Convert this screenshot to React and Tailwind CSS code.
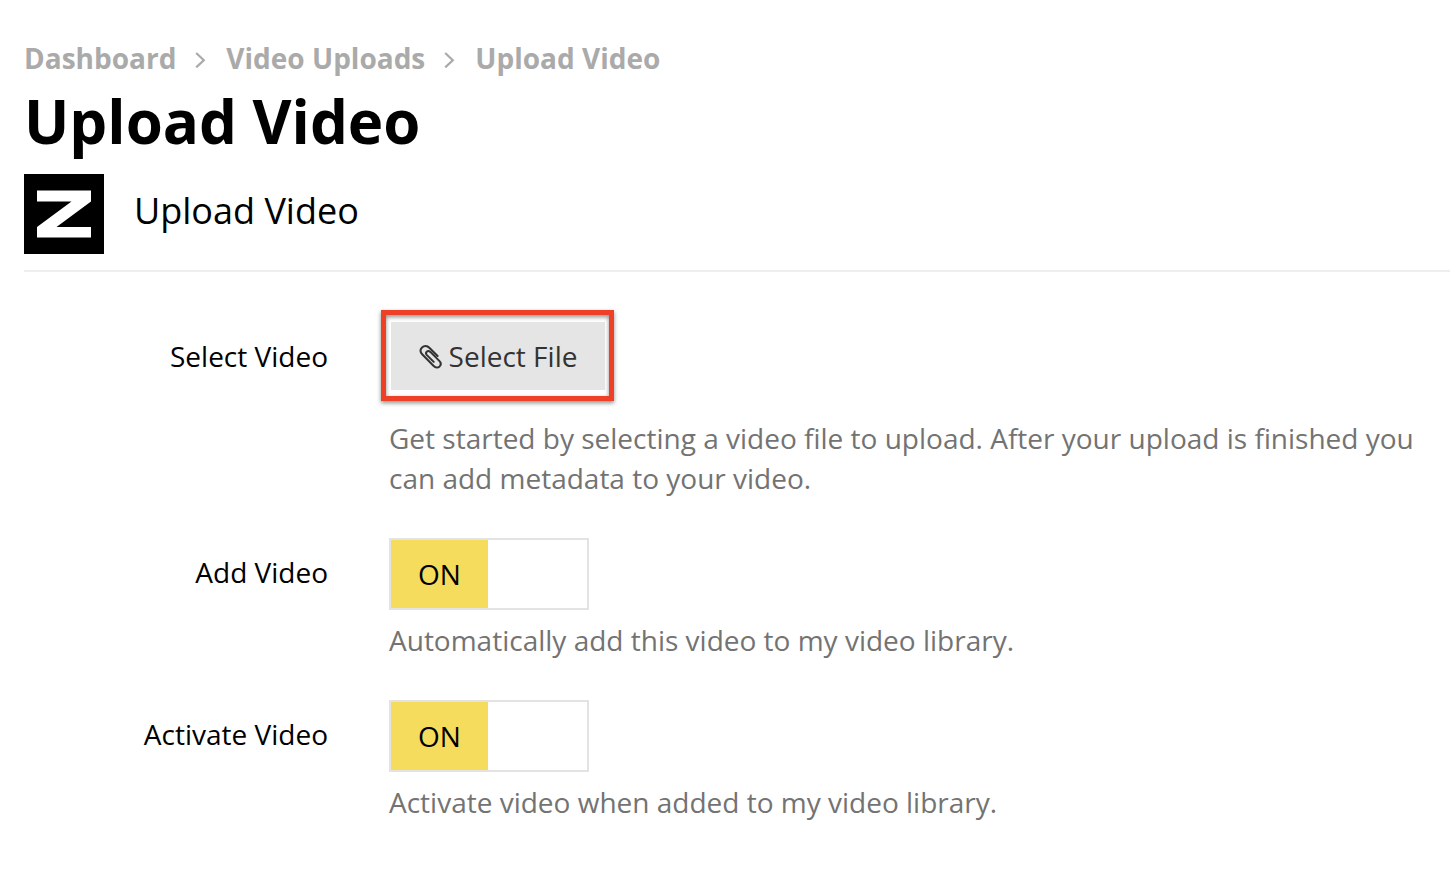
function Chevron() {
  return (
    <svg className="w-3 h-4 mt-1 shrink-0" viewBox="0 0 12 16" fill="none" stroke="#aaaaaa" strokeWidth="2.2" aria-hidden="true">
      <path d="M1.200 1 8.800 8.200 1.200 15.400" />
    </svg>
  );
}

function Logo() {
  return (
    <svg className="w-20 h-20 bg-black shrink-0" viewBox="0 0 80 80" fill="#ffffff" aria-hidden="true">
      <path d="M13 16.500H67V27.500L32.500 53H67V63.500H13V53L47.500 27.500H13Z" />
    </svg>
  );
}

function Paperclip() {
  return (
    <svg className="w-6 h-6 mt-0.5 shrink-0" viewBox="0 0 24 24" fill="none" stroke="#333333" strokeWidth="2" strokeLinecap="round" strokeLinejoin="round" aria-hidden="true">
      <path d="M18.600 11 10.600 3C8.100.500 5 .600 3 2.500 1 4.500 1.200 7.200 3.400 9.500L14.700 21C16.500 22.800 19 22.900 20.600 21.400 22.200 19.800 22 17.600 20.300 15.900L11.300 6.900C10.100 5.800 8.700 5.700 7.700 6.700 6.700 7.700 6.900 9 7.900 10.100L14.700 16.900" />
    </svg>
  );
}

function Toggle({ id }) {
  return (
    <div className="relative w-[200px] h-[72px] border-2 border-[#e3e3e3]">
      <input id={id} type="checkbox" defaultChecked className="peer absolute inset-0 w-full h-full opacity-0 cursor-pointer" />
      <span className="hidden peer-checked:flex w-[97px] h-full items-center justify-center bg-[#f5dc5d] text-black pointer-events-none">ON</span>
    </div>
  );
}

export default function UploadVideo() {
  const crumbs = ["Dashboard", "Video Uploads", "Upload Video"];
  const toggles = [
    { id: "add-video", label: "Add Video", help: "Automatically add this video to my video library." },
    { id: "activate-video", label: "Activate Video", help: "Activate video when added to my video library." },
  ];

  return (
    <div className="min-h-screen bg-white pl-6 pt-[38px] text-black text-[28px] leading-10 font-['Open_Sans',sans-serif]">
      <header>
        <nav aria-label="Breadcrumb">
          <ol className="flex items-center gap-[19px] font-bold text-[#aaaaaa]">
            {crumbs.map((crumb, i) => (
              <li key={crumb} className="flex items-center gap-[19px]">
                {i > 0 && <Chevron />}
                <a href="#">{crumb}</a>
              </li>
            ))}
          </ol>
        </nav>
        <h1 className="text-[60px] leading-[86px] font-bold">Upload Video</h1>
      </header>

      <div className="flex items-center gap-[30px] mt-[10px] pb-4 border-b-2 border-[#eeeeee]">
        <Logo />
        <h2 className="text-[36px] leading-[48px] pb-1.5">Upload Video</h2>
      </div>

      <form className="pt-12 pr-6">
        <div className="flex gap-[61px]">
          <label htmlFor="select-file" className="w-[304px] shrink-0 pt-4 text-right">Select Video</label>
          <div className="flex-1">
            <div className="relative w-[218px]">
              <button id="select-file" type="button" className="flex w-full h-[72px] items-center justify-center gap-1.5 border-2 border-white bg-[#e5e5e5] bg-clip-padding text-[#333333]">
                <Paperclip />
                Select File
              </button>
              <span className="absolute -left-2 -right-[7px] -top-[10px] -bottom-[9px] border-5 border-[#ee4026] drop-shadow-[0_2px_2px_rgba(0,0,0,0.45)] pointer-events-none" />
            </div>
            <p className="mt-[26px] text-[#737373]">
              Get started by selecting a video file to upload. After your upload is finished you can add metadata to your video.
            </p>
          </div>
        </div>

        {toggles.map((t) => (
          <div key={t.id} className="flex gap-[61px] mt-10 first-of-type:mt-0">
            <label htmlFor={t.id} className="w-[304px] shrink-0 pt-3.5 text-right">{t.label}</label>
            <div className="flex-1">
              <Toggle id={t.id} />
              <p className="mt-[10px] text-[#737373]">{t.help}</p>
            </div>
          </div>
        ))}
      </form>
    </div>
  );
}
